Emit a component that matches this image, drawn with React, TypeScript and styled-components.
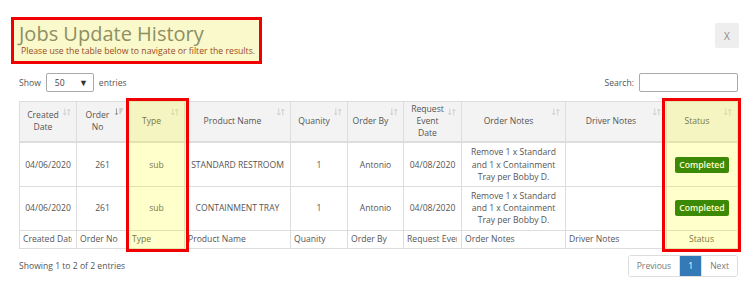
import React from "react";
import styled, { createGlobalStyle } from "styled-components";

const GlobalStyle = createGlobalStyle`
  html, body {
    margin: 0;
    padding: 0;
    background: #fff;
  }
  body {
    font-family: "Open Sans", "Liberation Sans", sans-serif;
    color: #555;
  }
`;

type Column = {
  key: string;
  label: string;
  width: number;
  sorted?: boolean;
  footAlign?: "left" | "center";
};

const columns: Column[] = [
  { key: "created", label: "Created Date", width: 57 },
  { key: "order", label: "Order No", width: 52, sorted: true },
  { key: "type", label: "Type", width: 56 },
  { key: "product", label: "Product Name", width: 106 },
  { key: "qty", label: "Quanity", width: 57 },
  { key: "by", label: "Order By", width: 56 },
  { key: "event", label: "Request Event Date", width: 58 },
  { key: "notes", label: "Order Notes", width: 104 },
  { key: "driver", label: "Driver Notes", width: 101 },
  { key: "status", label: "Status", width: 71, footAlign: "center" },
];

const rows = [
  {
    created: "04/06/2020",
    order: "261",
    type: "sub",
    product: "STANDARD RESTROOM",
    qty: "1",
    by: "Antonio",
    event: "04/08/2020",
    notes: "Remove 1 x Standard and 1 x Containment Tray per Bobby D.",
    driver: "",
    status: "Completed",
  },
  {
    created: "04/06/2020",
    order: "261",
    type: "sub",
    product: "CONTAINMENT TRAY",
    qty: "1",
    by: "Antonio",
    event: "04/08/2020",
    notes: "Remove 1 x Standard and 1 x Containment Tray per Bobby D.",
    driver: "",
    status: "Completed",
  },
];

function SortIcon({ sorted }: { sorted?: boolean }) {
  if (sorted) {
    return (
      <SortMark width="8" height="8" viewBox="0 0 8 8">
        <path d="M1.5 0.5 V7 M0 5.2 L1.5 7 L3 5.2" stroke="#999" strokeWidth="1" fill="none" />
        <path d="M4.3 1 H8 M4.3 3 H7 M4.3 5 H6" stroke="#aaa" strokeWidth="1" />
      </SortMark>
    );
  }
  return (
    <SortMark width="8" height="8" viewBox="0 0 8 8">
      <path d="M1.8 0.5 V7 M0.3 5.2 L1.8 7 L3.3 5.2" stroke="#cfcfcf" strokeWidth="1" fill="none" />
      <path d="M5.8 7.5 V1 M4.3 2.8 L5.8 1 L7.3 2.8" stroke="#cfcfcf" strokeWidth="1" fill="none" />
    </SortMark>
  );
}

export default function App() {
  return (
    <>
      <GlobalStyle />
      <Page>
        <TopBar>
          <TitleBox>
            <Title>Jobs Update History</Title>
            <Subtitle>Please use the table below to navigate or filter the results.</Subtitle>
          </TitleBox>
          <CloseButton>X</CloseButton>
        </TopBar>

        <Content>
          <Controls>
            <Label>
              Show
              <SelectBox>
                <span>50</span>
                <Caret>▼</Caret>
              </SelectBox>
              entries
            </Label>
            <Label>
              Search:
              <SearchInput />
            </Label>
          </Controls>

          <TableArea>
            <Table>
              <colgroup>
                {columns.map((c) => (
                  <col key={c.key} style={{ width: c.width }} />
                ))}
              </colgroup>
              <thead>
                <tr>
                  {columns.map((c) => (
                    <Th key={c.key}>
                      {c.label}
                      <SortIcon sorted={c.sorted} />
                    </Th>
                  ))}
                </tr>
              </thead>
              <tbody>
                {rows.map((r, i) => (
                  <tr key={i}>
                    {columns.map((c) => (
                      <Td key={c.key}>
                        {c.key === "status" ? (
                          <Badge>{r.status}</Badge>
                        ) : (
                          r[c.key as keyof typeof r]
                        )}
                      </Td>
                    ))}
                  </tr>
                ))}
              </tbody>
              <tfoot>
                <tr>
                  {columns.map((c) => (
                    <FootCell key={c.key} $align={c.footAlign ?? "left"}>
                      <FootText>{c.label}</FootText>
                    </FootCell>
                  ))}
                </tr>
              </tfoot>
            </Table>
            <Marker $left={107} $width={63} />
            <Marker $left={643} $width={79} />
          </TableArea>

          <InfoRow>
            <Info>Showing 1 to 2 of 2 entries</Info>
            <Pager>
              <PageItem>Previous</PageItem>
              <PageItem $active>1</PageItem>
              <PageItem>Next</PageItem>
            </Pager>
          </InfoRow>
        </Content>
      </Page>
    </>
  );
}

const Page = styled.div`
  width: 755px;
  height: 292px;
  box-sizing: border-box;
  padding-top: 17px;
  overflow: hidden;
`;

const TopBar = styled.div`
  display: flex;
  align-items: flex-start;
  justify-content: space-between;
  padding: 0 16px 0 11px;
`;

const TitleBox = styled.div`
  width: 251px;
  height: 47px;
  box-sizing: border-box;
  border: 3px solid #f00000;
  background: #f9f9cc;
  padding: 3px 0 0 5px;
`;

const Title = styled.div`
  font-size: 20px;
  line-height: 22px;
  color: #8f8f62;
`;

const Subtitle = styled.div`
  font-size: 8.7px;
  line-height: 12px;
  color: #9a4a22;
  padding-left: 2px;
`;

const CloseButton = styled.div`
  margin-top: 6px;
  width: 24px;
  height: 25px;
  border-radius: 2px;
  background: #eeeeee;
  color: #8a8a8a;
  font-size: 10px;
  display: flex;
  align-items: center;
  justify-content: center;
`;

const Content = styled.div`
  padding: 9px 17px 0 19px;
`;

const Controls = styled.div`
  display: flex;
  justify-content: space-between;
  align-items: center;
  height: 19px;
`;

const Label = styled.div`
  display: flex;
  align-items: center;
  gap: 5px;
  font-size: 8.6px;
  color: #555;
`;

const SelectBox = styled.div`
  width: 48px;
  height: 19px;
  box-sizing: border-box;
  border: 1px solid #aaa;
  border-radius: 2px;
  display: flex;
  align-items: center;
  justify-content: space-between;
  padding: 0 5px 0 8px;
  font-size: 8.6px;
  color: #444;
`;

const Caret = styled.span`
  font-size: 9px;
  color: #333;
`;

const SearchInput = styled.div`
  width: 99px;
  height: 19px;
  box-sizing: border-box;
  border: 1px solid #aaa;
  border-radius: 2px;
`;

const TableArea = styled.div`
  position: relative;
  margin-top: 9px;
`;

const Table = styled.table`
  width: 718px;
  table-layout: fixed;
  border-collapse: collapse;
  font-size: 8.6px;
  color: #555;
`;

const Th = styled.th`
  position: relative;
  background: #f3f3f3;
  border: 1px solid #dddddd;
  border-bottom: 2px solid #dddddd;
  font-weight: normal;
  line-height: 11.8px;
  padding: 2px 13px 2px 3px;
  text-align: center;
  vertical-align: middle;
`;

const SortMark = styled.svg`
  position: absolute;
  top: 6px;
  right: 5px;
`;

const Td = styled.td`
  border: 1px solid #dddddd;
  line-height: 12.2px;
  padding: 3px 4px;
  text-align: center;
  vertical-align: middle;
`;

const FootCell = styled.td<{ $align: "left" | "center" }>`
  border: 1px solid #dddddd;
  line-height: 12px;
  padding: 2px 4px 3px 3px;
  text-align: ${(p) => p.$align};
`;

const FootText = styled.div`
  white-space: nowrap;
  overflow: hidden;
`;

const Badge = styled.span`
  display: inline-block;
  background: #0c6c08;
  color: #ffffff;
  border-radius: 2px;
  padding: 2px 4px;
  font-size: 8.6px;
  line-height: 12px;
  font-weight: 600;
`;

const Marker = styled.div<{ $left: number; $width: number }>`
  position: absolute;
  top: -3px;
  left: ${(p) => p.$left}px;
  width: ${(p) => p.$width}px;
  height: 154px;
  box-sizing: border-box;
  border: 3px solid #f00000;
  background: rgba(255, 255, 0, 0.2);
  pointer-events: none;
`;

const InfoRow = styled.div`
  display: flex;
  justify-content: space-between;
  align-items: center;
  margin-top: 6px;
`;

const Info = styled.div`
  font-size: 8.6px;
  color: #555;
`;

const Pager = styled.div`
  display: flex;
  height: 20px;
  border: 1px solid #dddddd;
  border-radius: 3px;
  overflow: hidden;
`;

const PageItem = styled.div<{ $active?: boolean }>`
  display: flex;
  align-items: center;
  padding: 0 8px;
  font-size: 8.6px;
  color: ${(p) => (p.$active ? "#fff" : "#777")};
  background: ${(p) => (p.$active ? "#337ab7" : "#fff")};
  & + & {
    border-left: 1px solid #dddddd;
  }
`;
